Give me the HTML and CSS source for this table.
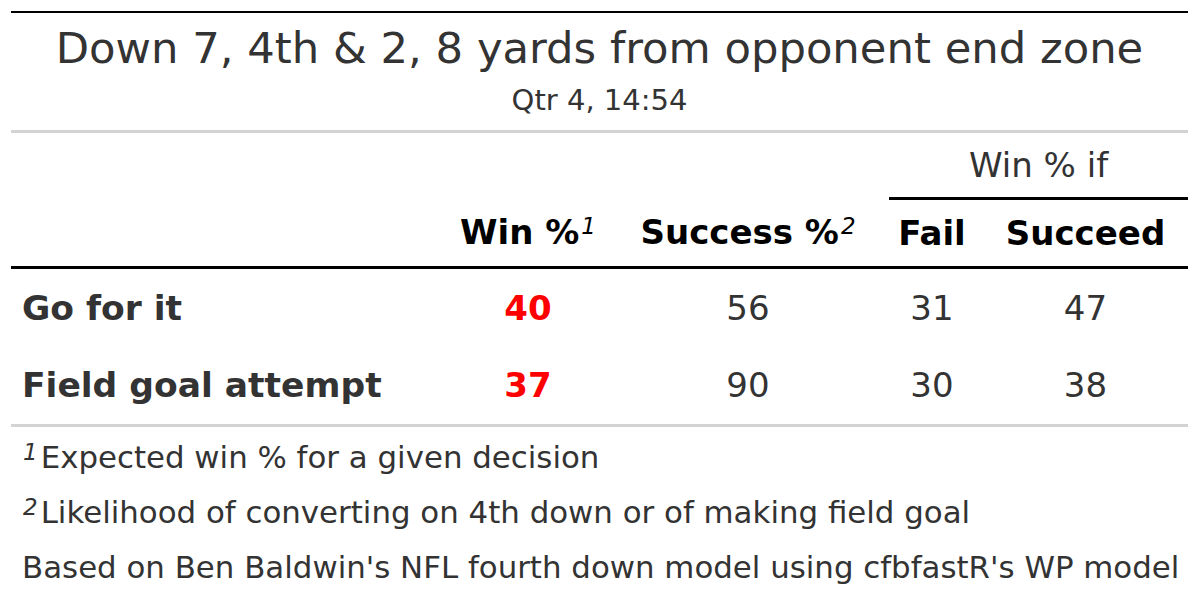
FILE: index.html
```html
<!DOCTYPE html>
<html>
<head>
<meta charset="utf-8">
<link rel="stylesheet" href="styles.css">
</head>
<body>
<div class="gt">
  <div class="heading">
    <div class="title">Down 7, 4th &amp; 2, 8 yards from opponent end zone</div>
    <div class="subtitle">Qtr 4, 14:54</div>
  </div>
  <table class="tbl">
    <colgroup>
      <col class="c-stub"><col class="c-win"><col class="c-succ"><col class="c-fail"><col class="c-sd">
    </colgroup>
    <thead>
      <tr class="spanrow">
        <th></th><th></th><th></th>
        <th colspan="2" class="spanner">Win % if</th>
      </tr>
      <tr class="labelrow">
        <th></th>
        <th>Win %<sup class="mark">1</sup></th>
        <th>Success %<sup class="mark">2</sup></th>
        <th>Fail</th>
        <th class="sd">Succeed</th>
      </tr>
    </thead>
    <tbody>
      <tr>
        <td class="stub">Go for it</td>
        <td class="hl">40</td>
        <td>56</td>
        <td>31</td>
        <td class="sd">47</td>
      </tr>
      <tr>
        <td class="stub">Field goal attempt</td>
        <td class="hl">37</td>
        <td>90</td>
        <td>30</td>
        <td class="sd">38</td>
      </tr>
    </tbody>
  </table>
  <div class="notes">
    <div class="note"><sup class="fmark">1</sup>Expected win % for a given decision</div>
    <div class="note"><sup class="fmark">2</sup>Likelihood of converting on 4th down or of making field goal</div>
    <div class="note src">Based on Ben Baldwin's NFL fourth down model using cfbfastR's WP model</div>
  </div>
</div>
</body>
</html>
```
FILE: styles.css
```css
html, body {
  margin: 0;
  padding: 0;
  background: #ffffff;
}
body {
  font-family: "DejaVu Sans", sans-serif;
  color: #333333;
}
.gt {
  width: 1177px;
  margin: 11px 0 0 11px;
  border-top: 2px solid #000000;
}
.heading {
  padding: 10px 0 13px;
  border-bottom: 3px solid #d3d3d3;
  text-align: center;
}
.title {
  font-size: 43.3px;
  line-height: 50px;
}
.subtitle {
  margin-top: 10px;
  font-size: 29px;
  line-height: 34px;
}
.tbl {
  width: 1177px;
  border-collapse: collapse;
  table-layout: fixed;
  font-size: 34px;
}
.c-stub { width: 438px; }
.c-win { width: 158px; }
.c-succ { width: 282px; }
.c-fail { width: 86px; }
.c-sd { width: 213px; }
.tbl th, .tbl td {
  padding: 0;
  text-align: center;
  white-space: nowrap;
}
.spanrow th {
  height: 64px;
  font-weight: normal;
  vertical-align: middle;
}
.spanner {
  border-bottom: 3px solid #000000;
  color: #333333;
  padding-top: 2px;
}
.labelrow th {
  height: 66px;
  color: #000000;
  font-weight: bold;
  border-bottom: 3px solid #000000;
}
.labelrow th.sd, td.sd {
  padding-left: 8px;
}
.mark {
  font-size: 23px;
  font-style: italic;
  font-weight: normal;
  vertical-align: 0.45em;
  line-height: 0;
  margin-left: 2px;
}
.tbl tbody td {
  height: 77px;
}
.tbl tbody tr:last-child td {
  height: 78px;
  border-bottom: 3px solid #d3d3d3;
}
.tbl td.stub {
  text-align: left;
  padding-left: 11px;
  font-weight: bold;
  font-size: 34.5px;
}
.tbl td.hl {
  color: #ff0000;
  font-weight: bold;
}
.notes {
  padding-top: 3px;
}
.note {
  font-size: 30.85px;
  line-height: 55px;
  padding-left: 12px;
}
.note.src {
  padding-left: 11px;
}
.fmark {
  font-size: 23px;
  font-style: italic;
  vertical-align: 0.35em;
  line-height: 0;
  margin-right: 3px;
}
```
